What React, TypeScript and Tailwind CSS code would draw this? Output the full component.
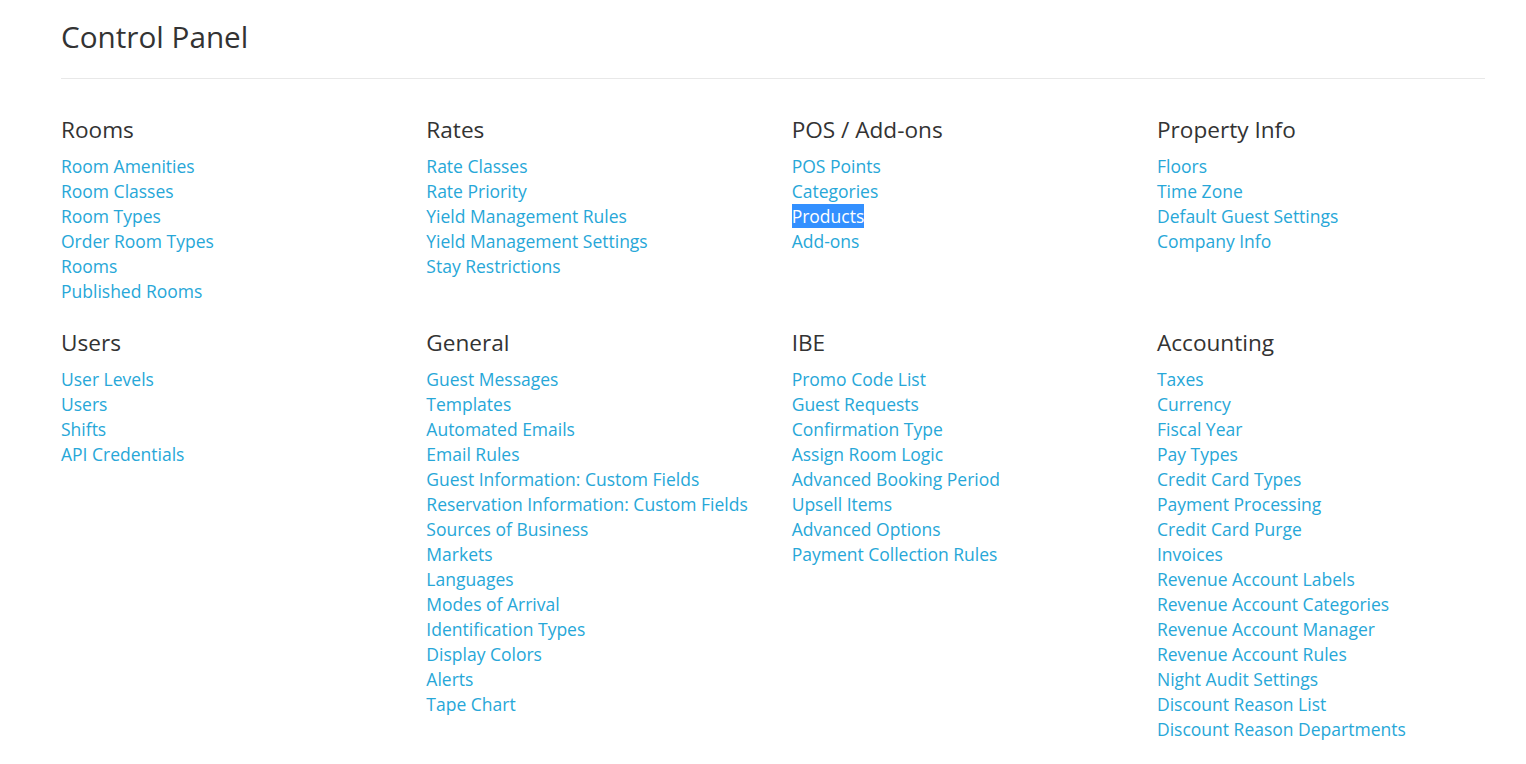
import React from 'react';

type Section = { title: string; links: string[] };

const rows: Section[][] = [
  [
    { title: 'Rooms', links: ['Room Amenities', 'Room Classes', 'Room Types', 'Order Room Types', 'Rooms', 'Published Rooms'] },
    { title: 'Rates', links: ['Rate Classes', 'Rate Priority', 'Yield Management Rules', 'Yield Management Settings', 'Stay Restrictions'] },
    { title: 'POS / Add-ons', links: ['POS Points', 'Categories', 'Products', 'Add-ons'] },
    { title: 'Property Info', links: ['Floors', 'Time Zone', 'Default Guest Settings', 'Company Info'] },
  ],
  [
    { title: 'Users', links: ['User Levels', 'Users', 'Shifts', 'API Credentials'] },
    {
      title: 'General',
      links: [
        'Guest Messages', 'Templates', 'Automated Emails', 'Email Rules', 'Guest Information: Custom Fields',
        'Reservation Information: Custom Fields', 'Sources of Business', 'Markets', 'Languages', 'Modes of Arrival',
        'Identification Types', 'Display Colors', 'Alerts', 'Tape Chart',
      ],
    },
    {
      title: 'IBE',
      links: [
        'Promo Code List', 'Guest Requests', 'Confirmation Type', 'Assign Room Logic', 'Advanced Booking Period',
        'Upsell Items', 'Advanced Options', 'Payment Collection Rules',
      ],
    },
    {
      title: 'Accounting',
      links: [
        'Taxes', 'Currency', 'Fiscal Year', 'Pay Types', 'Credit Card Types', 'Payment Processing', 'Credit Card Purge',
        'Invoices', 'Revenue Account Labels', 'Revenue Account Categories', 'Revenue Account Manager',
        'Revenue Account Rules', 'Night Audit Settings', 'Discount Reason List', 'Discount Reason Departments',
      ],
    },
  ],
];

const SectionBlock: React.FC<{ section: Section }> = ({ section }) => (
  <div>
    <h3 className="text-[22.6px] leading-[30px] text-[#333] mb-[9px]">{section.title}</h3>
    <ul>
      {section.links.map(link => (
        <li key={link} className="text-[17.5px] leading-[25px]">
          <a href="#" className={link === 'Products' ? 'bg-[#3390ff] text-white' : 'text-[#27a7d8]'}>
            {link}
          </a>
        </li>
      ))}
    </ul>
  </div>
);

export default function App() {
  return (
    <div className="min-h-screen bg-white font-['Open_Sans',sans-serif] text-[#333]">
      <div className="pl-[61px] pr-[41px] pt-[17px]">
        <h1 className="text-[29.7px] leading-[40px]">Control Panel</h1>
        <hr className="mt-[21px] border-t border-[#e8e8e8]" />
        <div className="mt-[36px] flex flex-col gap-[23.5px]">
          {rows.map((row, i) => (
            <div key={i} className="grid grid-cols-[repeat(4,365.33px)]">
              {row.map(section => (
                <SectionBlock key={section.title} section={section} />
              ))}
            </div>
          ))}
        </div>
      </div>
    </div>
  );
}
